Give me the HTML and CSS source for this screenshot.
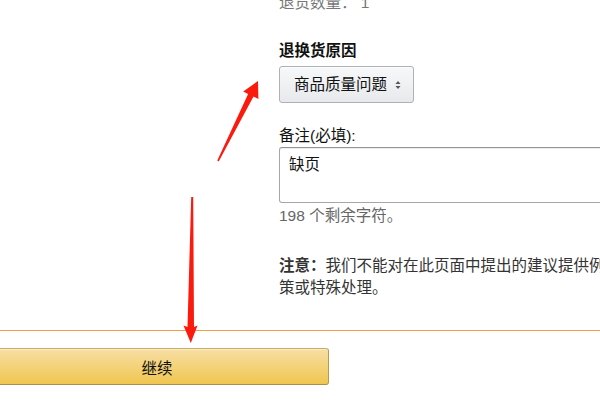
FILE: index.html
```html
<!DOCTYPE html>
<html lang="zh-CN">
<head>
  <meta charset="UTF-8">
  <title>退换货</title>
  <link rel="stylesheet" href="styles.css">
</head>
<body>

  <div class="form">
    <div class="qty">退货数量：&nbsp;1</div>

    <div class="label-bold">退换货原因</div>
    <div class="dropdown">
      <span>商品质量问题</span>
      <svg class="caret" width="6" height="10" viewBox="0 0 6 10">
        <path d="M3 1 L5.5 4 L0.5 4 Z" fill="#555"/>
        <path d="M3 9 L5.5 6 L0.5 6 Z" fill="#555"/>
      </svg>
    </div>

    <div class="label">备注(必填):</div>
    <textarea class="comment">缺页</textarea>
    <div class="remain">198 个剩余字符。</div>

    <p class="note"><b>注意：</b>我们不能对在此页面中提出的建议提供例外政策或特殊处理。</p>
  </div>

  <div class="footer">
    <div class="rule"></div>
    <button class="continue">继续</button>
  </div>

  <!-- 标注箭头 -->
  <svg class="arrows" width="600" height="400" viewBox="0 0 600 400">
    <polygon fill="#fb1a0e" points="217.3,160.6 218.7,161.4 253.5,96.6 258.4,99.1 258,81 243.2,91.5 248.1,94"/>
    <polygon fill="#fb1a0e" points="191.2,197 193.2,197 194,327 197.5,325.5 190.8,343 183.5,325.5 187.5,327"/>
  </svg>

</body>
</html>
```

FILE: styles.css
```css
body {
  margin: 0;
  padding: 0;
  background-color: #fff;
  color: #111;
  font-family: "Liberation Sans", Arial, "Noto Sans CJK SC", sans-serif;
  font-size: 15.5px;
  line-height: 20px;
  overflow: hidden;
  width: 600px;
  height: 400px;
  position: relative;
}
.form {
  margin-left: 279px;
  width: 400px;
}
.qty {
  color: #777;
  margin-top: -7px;
}
.label-bold {
  font-weight: bold;
  margin-top: 28px;
}
.dropdown {
  margin-top: 5px;
  width: 135px;
  height: 37px;
  box-sizing: border-box;
  border: 1px solid #adb1b8;
  border-radius: 3px;
  background: linear-gradient(#f7f8fa, #e7e9ec);
  box-shadow: 0 1px 0 rgba(255, 255, 255, 0.6) inset;
  display: flex;
  align-items: center;
  padding-left: 14px;
}
.dropdown span {
  color: #111;
}
.caret {
  margin-left: 8px;
}
.label {
  margin-top: 23px;
  color: #111;
}
.comment {
  display: block;
  margin: 1px 0 0 0;
  width: 400px;
  height: 56px;
  box-sizing: border-box;
  border: 1px solid #a6a6a6;
  border-top-color: #949494;
  border-radius: 3px;
  box-shadow: 0 1px 0 rgba(0, 0, 0, 0.07) inset;
  padding: 7px 9px;
  font-family: inherit;
  font-size: 15.5px;
  line-height: 20px;
  color: #111;
  resize: none;
}
.remain {
  margin-top: 3px;
  color: #666;
}
.note {
  margin: 29px 0 0 0;
  line-height: 22px;
  width: 362px;
  color: #333;
}
.note b {
  color: #333;
}
.footer {
  margin-top: 31px;
}
.rule {
  height: 1px;
  background-color: #f0a04a;
}
.continue {
  display: block;
  margin: 17px 0 0 -15px;
  width: 344px;
  height: 37px;
  border: 1px solid;
  border-color: #c9ac61 #b39a57 #a88f4c;
  border-radius: 3px;
  background: linear-gradient(#f7dfa5, #f0c64f);
  box-shadow: 0 1px 0 rgba(255, 255, 255, 0.4) inset;
  font-family: inherit;
  font-size: 15.5px;
  color: #111;
  padding: 0;
}
.arrows {
  position: absolute;
  left: 0;
  top: 0;
  pointer-events: none;
}
```
